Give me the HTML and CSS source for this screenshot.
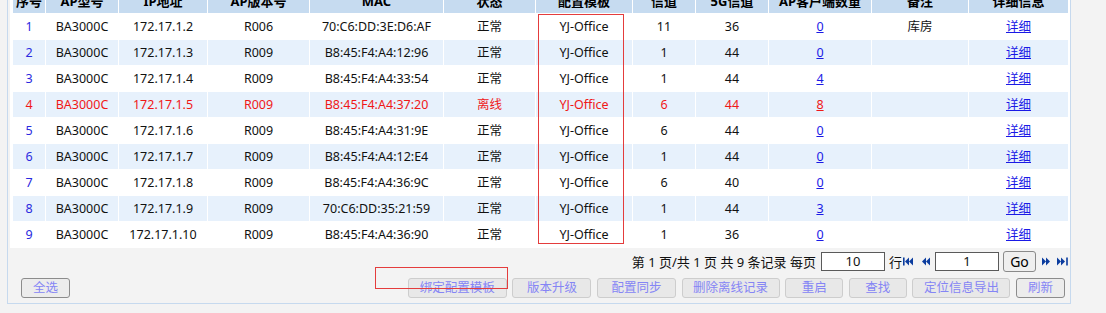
FILE: index.html
```html
<!DOCTYPE html>
<html lang="zh-CN">
<head>
<meta charset="utf-8">
<title>AP列表</title>
<link rel="stylesheet" href="styles.css">
</head>
<body>
<div class="panel">
  <div class="grid-wrap">
    <table class="grid">
      <colgroup>
        <col class="c1"><col class="c2"><col class="c3"><col class="c4"><col class="c5"><col class="c6">
        <col class="c7"><col class="c8"><col class="c9"><col class="c10"><col class="c11"><col class="c12">
      </colgroup>
      <thead>
        <tr><th>序号</th><th>AP型号</th><th>IP地址</th><th>AP版本号</th><th>MAC</th><th>状态</th><th>配置模板</th><th>信道</th><th>5G信道</th><th>AP客户端数量</th><th>备注</th><th>详细信息</th></tr>
      </thead>
      <tbody>
        <tr><td class="no">1</td><td>BA3000C</td><td>172.17.1.2</td><td>R006</td><td>70:C6:DD:3E:D6:AF</td><td>正常</td><td>YJ-Office</td><td>11</td><td>36</td><td><a class="lnk">0</a></td><td>库房</td><td><a class="lnk">详细</a></td></tr>
        <tr><td class="no">2</td><td>BA3000C</td><td>172.17.1.3</td><td>R009</td><td>B8:45:F4:A4:12:96</td><td>正常</td><td>YJ-Office</td><td>1</td><td>44</td><td><a class="lnk">0</a></td><td></td><td><a class="lnk">详细</a></td></tr>
        <tr><td class="no">3</td><td>BA3000C</td><td>172.17.1.4</td><td>R009</td><td>B8:45:F4:A4:33:54</td><td>正常</td><td>YJ-Office</td><td>1</td><td>44</td><td><a class="lnk">4</a></td><td></td><td><a class="lnk">详细</a></td></tr>
        <tr class="offline"><td class="no">4</td><td>BA3000C</td><td>172.17.1.5</td><td>R009</td><td>B8:45:F4:A4:37:20</td><td>离线</td><td>YJ-Office</td><td>6</td><td>44</td><td><a class="lnk">8</a></td><td></td><td><a class="lnk detail">详细</a></td></tr>
        <tr><td class="no">5</td><td>BA3000C</td><td>172.17.1.6</td><td>R009</td><td>B8:45:F4:A4:31:9E</td><td>正常</td><td>YJ-Office</td><td>6</td><td>44</td><td><a class="lnk">0</a></td><td></td><td><a class="lnk">详细</a></td></tr>
        <tr><td class="no">6</td><td>BA3000C</td><td>172.17.1.7</td><td>R009</td><td>B8:45:F4:A4:12:E4</td><td>正常</td><td>YJ-Office</td><td>1</td><td>44</td><td><a class="lnk">0</a></td><td></td><td><a class="lnk">详细</a></td></tr>
        <tr><td class="no">7</td><td>BA3000C</td><td>172.17.1.8</td><td>R009</td><td>B8:45:F4:A4:36:9C</td><td>正常</td><td>YJ-Office</td><td>6</td><td>40</td><td><a class="lnk">0</a></td><td></td><td><a class="lnk">详细</a></td></tr>
        <tr><td class="no">8</td><td>BA3000C</td><td>172.17.1.9</td><td>R009</td><td>70:C6:DD:35:21:59</td><td>正常</td><td>YJ-Office</td><td>1</td><td>44</td><td><a class="lnk">3</a></td><td></td><td><a class="lnk">详细</a></td></tr>
        <tr><td class="no">9</td><td>BA3000C</td><td>172.17.1.10</td><td>R009</td><td>B8:45:F4:A4:36:90</td><td>正常</td><td>YJ-Office</td><td>1</td><td>36</td><td><a class="lnk">0</a></td><td></td><td><a class="lnk">详细</a></td></tr>
      </tbody>
    </table>
  </div>

  <div class="pager">
    <span class="pager-text">第 1 页/共 1 页 共 9 条记录 每页</span>
    <span class="pager-input">10</span>
    <span class="pager-row">行</span>
    <svg class="pico first" width="11" height="9" viewBox="0 0 11 9"><rect x="0" y="0.5" width="1.6" height="8"/><path d="M2 4.5 L6 0.5 L6 8.5 Z M6 4.5 L10 0.5 L10 8.5 Z"/></svg>
    <svg class="pico prev" width="8" height="9" viewBox="0 0 8 9"><path d="M0 4.5 L4 0.5 L4 8.5 Z M4 4.5 L8 0.5 L8 8.5 Z"/></svg>
    <span class="pager-input page">1</span>
    <span class="go">Go</span>
    <svg class="pico next" width="8" height="9" viewBox="0 0 8 9"><path d="M0 0.5 L4 4.5 L0 8.5 Z M4 0.5 L8 4.5 L4 8.5 Z"/></svg>
    <svg class="pico last" width="11" height="9" viewBox="0 0 11 9"><path d="M0 0.5 L4 4.5 L0 8.5 Z M4 0.5 L8 4.5 L4 8.5 Z"/><rect x="9.2" y="0.5" width="1.6" height="8"/></svg>
  </div>

  <div class="actions">
    <span class="btn strong w2s">全选</span>
    <div class="btn-group">
      <span class="btn w6">绑定配置模板</span>
      <span class="btn w4">版本升级</span>
      <span class="btn w4">配置同步</span>
      <span class="btn w6b">删除离线记录</span>
      <span class="btn w2">重启</span>
      <span class="btn w2">查找</span>
      <span class="btn w6b">定位信息导出</span>
      <span class="btn strong w2s">刷新</span>
    </div>
  </div>
</div>

<div class="mark mark-col"></div>
<div class="mark mark-btn"></div>
</body>
</html>
```

FILE: styles.css
```css
html, body {
  margin: 0;
  padding: 0;
}
body {
  background: #f3f3f3;
  font-family: "Noto Sans", "Noto Sans CJK SC", sans-serif;
  color: #111;
  height: 313px;
  overflow: hidden;
}
.panel {
  margin: -13px 0 0 7px;
  border-left: 1px solid #c6d9ee;
  border-right: 1px solid #c6d9ee;
  border-bottom: 1px solid #c6d9ee;
  background: #f3f3f3;
  padding: 0 0 5px 2px;
  box-sizing: content-box;
  width: 1060px;
}
.grid-wrap {
  background: #fff;
  padding: 0 1px 0 2px;
}
.grid {
  table-layout: fixed;
  width: 1057px;
  border-collapse: separate;
  border-spacing: 1px;
  font-size: 12.5px;
}
.c1 { width: 32px; }
.c2 { width: 72px; }
.c3 { width: 88px; }
.c4 { width: 101px; }
.c5 { width: 133px; }
.c6 { width: 91px; }
.c7 { width: 96px; }
.c8 { width: 62px; }
.c9 { width: 72px; }
.c10 { width: 102px; }
.c11 { width: 96px; }
.c12 { width: 99px; }
.grid th, .grid td {
  height: 24px;
  padding: 1px 0 0;
  text-align: center;
  white-space: nowrap;
  overflow: hidden;
  line-height: 24px;
}
.grid th {
  background: #c6dbf0;
  font-weight: bold;
  font-size: 13px;
  color: #000;
}
.grid tbody tr:nth-child(even) td {
  background: #e7f1fc;
}
.grid td.no {
  color: #2a2ae0;
}
.lnk {
  color: #1a1ae6;
  text-decoration: underline;
}
.offline td, .offline td.no, .offline .lnk {
  color: #f01818;
}
.offline .lnk.detail {
  color: #1a1ae6;
}

.pager {
  height: 27px;
  display: flex;
  align-items: center;
  justify-content: flex-end;
  padding-right: 2px;
  font-size: 13px;
  color: #111;
}
.pager-text {
  margin-right: 5px;
}
.pager-input {
  width: 62px;
  height: 17px;
  border: 1px solid #5a5a5a;
  background: #fff;
  text-align: center;
  line-height: 17px;
  font-size: 13px;
}
.pager-row {
  margin-left: 4px;
}
.pico {
  fill: #0b3c9e;
  display: block;
}
.pico.first { margin-left: 1px; }
.pico.prev { margin-left: 8px; }
.pager-input.page { margin-left: 5px; }
.go {
  margin-left: 4px;
  width: 31px;
  height: 19px;
  border: 1px solid #8a8a8a;
  border-radius: 3px;
  background: #efefef;
  text-align: center;
  line-height: 19px;
  font-size: 14px;
  color: #000;
}
.pico.next { margin-left: 6px; }
.pico.last { margin-left: 7px; }

.actions {
  margin-top: 3px;
  display: flex;
  align-items: center;
  justify-content: space-between;
  padding: 0 5px 0 11px;
}
.btn-group {
  display: flex;
  gap: 5.6px;
}
.btn {
  display: block;
  box-sizing: border-box;
  height: 20px;
  line-height: 18px;
  border: 1px solid #cdcdcd;
  border-radius: 3px;
  background: #e8e8e8;
  color: #8585f5;
  font-size: 12.5px;
  text-align: center;
}
.btn.strong {
  border-color: #8c8c8c;
  background: #ececec;
}
.w2s { width: 49px; }
.w2 { width: 58px; }
.w4 { width: 79px; }
.w6 { width: 99px; }
.w6b { width: 98px; }

.mark {
  position: absolute;
  border: 1px solid #e43c3c;
  box-sizing: border-box;
}
.mark-col {
  left: 538px;
  top: 14px;
  width: 86px;
  height: 230px;
}
.mark-btn {
  left: 375px;
  top: 267px;
  width: 133px;
  height: 22px;
}
```
